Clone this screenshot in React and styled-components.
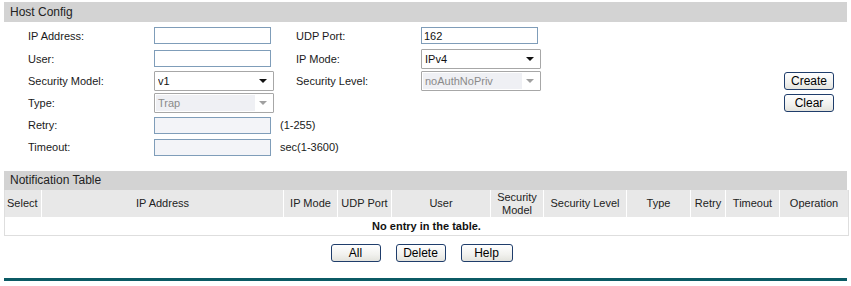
import React from 'react';
import styled, { createGlobalStyle } from 'styled-components';

const GlobalStyle = createGlobalStyle`
  body {
    margin: 0;
    background: #fff;
    font-family: "Liberation Sans", Arial, sans-serif;
    font-size: 11px;
    color: #222;
  }
`;

const columns = [
  { title: 'Select', width: 37 },
  { title: 'IP Address', width: 242 },
  { title: 'IP Mode', width: 54 },
  { title: 'UDP Port', width: 54 },
  { title: 'User', width: 99 },
  { title: ['Security', 'Model'], width: 53 },
  { title: 'Security Level', width: 83 },
  { title: 'Type', width: 64 },
  { title: 'Retry', width: 35 },
  { title: 'Timeout', width: 54 },
  { title: 'Operation', width: 68 }
];

const App = () => {
  return (
    <Page>
      <GlobalStyle />
      <SectionTitle>Host Config</SectionTitle>
      <Form>
        <ActionCell $row={3}>
          <Button>Create</Button>
        </ActionCell>
        <ActionCell $row={4}>
          <Button>Clear</Button>
        </ActionCell>

        <Label $col={1}>IP Address:</Label>
        <Cell><TextInput /></Cell>
        <Label $col={3}>UDP Port:</Label>
        <Cell><TextInput defaultValue="162" /></Cell>

        <Label $col={1}>User:</Label>
        <Cell><TextInput /></Cell>
        <Label $col={3}>IP Mode:</Label>
        <Cell>
          <Select value="IPv4" />
        </Cell>

        <Label $col={1}>Security Model:</Label>
        <Cell>
          <Select value="v1" />
        </Cell>
        <Label $col={3}>Security Level:</Label>
        <Cell>
          <Select value="noAuthNoPriv" disabled />
        </Cell>

        <Label $col={1}>Type:</Label>
        <Cell>
          <Select value="Trap" disabled />
        </Cell>

        <Label $col={1}>Retry:</Label>
        <WideCell>
          <TextInput $soft />
          <Hint>(1-255)</Hint>
        </WideCell>

        <Label $col={1}>Timeout:</Label>
        <WideCell>
          <TextInput $soft />
          <Hint>sec(1-3600)</Hint>
        </WideCell>
      </Form>

      <SectionTitle $gap>Notification Table</SectionTitle>
      <Table>
        <colgroup>
          {columns.map((c, i) => (
            <col key={i} style={{ width: c.width }} />
          ))}
        </colgroup>
        <thead>
          <tr>
            {columns.map((c, i) => (
              <HeadCell key={i}>
                {Array.isArray(c.title) ? (
                  <>
                    {c.title[0]}
                    <br />
                    {c.title[1]}
                  </>
                ) : (
                  c.title
                )}
              </HeadCell>
            ))}
          </tr>
        </thead>
        <tbody>
          <tr>
            <EmptyCell colSpan={columns.length}>No entry in the table.</EmptyCell>
          </tr>
        </tbody>
      </Table>

      <Footer>
        <Button>All</Button>
        <Button>Delete</Button>
        <Button $wide>Help</Button>
      </Footer>
      <BottomLine />
    </Page>
  );
};

const Select = ({ value, disabled }) => (
  <SelectBox>
    <NativeSelect disabled={disabled} defaultValue={value}>
      <option>{value}</option>
    </NativeSelect>
    <Arrow $disabled={disabled} />
  </SelectBox>
);

const Page = styled.div`
  width: 843px;
  margin: 2px 0 0 4px;
`;

const SectionTitle = styled.div`
  background: #d3d3d3;
  color: #222;
  font-size: 12px;
  padding-left: 6px;
  margin-top: ${(p) => (p.$gap ? '13px' : '0')};
  height: ${(p) => (p.$gap ? '19px' : '20px')};
  line-height: ${(p) => (p.$gap ? '19px' : '20px')};
`;

const Form = styled.div`
  display: grid;
  grid-template-columns: 126px 142px 125px 1fr auto;
  grid-template-rows: 23px 23px 21px 23px 22px 22px;
  align-items: center;
  padding: 2px 13px 0 24px;
`;

const Label = styled.div`
  grid-column: ${(p) => p.$col};
  color: #1a1a1a;
  white-space: nowrap;
`;

const Cell = styled.div`
  display: flex;
  align-items: center;
`;

const WideCell = styled(Cell)`
  grid-column: 2 / 5;
  gap: 9px;
`;

const ActionCell = styled.div`
  grid-column: 5;
  grid-row: ${(p) => p.$row};
  display: flex;
  justify-content: flex-end;
`;

const TextInput = styled.input`
  box-sizing: border-box;
  width: 117px;
  height: 17px;
  border: 1px solid #7f9db9;
  padding: 0 2px;
  margin: 0;
  font-family: "Liberation Sans", Arial, sans-serif;
  font-size: 11px;
  color: #111;
  background: ${(p) => (p.$soft ? '#f3f4f8' : '#fff')};
  outline: none;
`;

const Hint = styled.span`
  color: #1a1a1a;
  white-space: nowrap;
`;

const SelectBox = styled.div`
  position: relative;
  width: 120px;
  height: 20px;
`;

const NativeSelect = styled.select`
  appearance: none;
  box-sizing: border-box;
  width: 120px;
  height: 20px;
  margin: 0;
  padding: 0 3px;
  border: 1px solid #a7a7a7;
  border-radius: 1px;
  font-family: "Liberation Sans", Arial, sans-serif;
  font-size: 11px;
  color: #111;
  background: #fff;
  outline: none;

  &:disabled {
    color: #8a8a8a;
    opacity: 1;
    background: linear-gradient(to right, #eff0f4 calc(100% - 18px), #fff calc(100% - 18px));
    background-clip: content-box;
    padding: 1px 0 1px 1px;
    text-indent: 2px;
  }
`;

const Arrow = styled.span`
  position: absolute;
  right: 7px;
  top: 8px;
  width: 0;
  height: 0;
  border-left: 4px solid transparent;
  border-right: 4px solid transparent;
  border-top: 4px solid ${(p) => (p.$disabled ? '#a0a0a0' : '#111')};
  pointer-events: none;
`;

const Button = styled.button`
  box-sizing: border-box;
  width: ${(p) => (p.$wide ? '52px' : '50px')};
  height: 18px;
  padding: 0;
  border: 1px solid #1f3d6b;
  border-radius: 3px;
  background: linear-gradient(#ffffff, #f1f1ee 60%, #e3e3dd);
  font-family: "Liberation Sans", Arial, sans-serif;
  font-size: 12px;
  color: #000;
`;

const Table = styled.table`
  width: 843px;
  table-layout: fixed;
  border-collapse: separate;
  border-spacing: 0;
  border: 1px solid #dedede;
  border-top: none;
  font-size: 11px;
`;

const HeadCell = styled.th`
  height: 27px;
  padding: 0;
  background: #e8e8e8;
  border-right: 1px solid #fff;
  font-weight: normal;
  color: #222;
  line-height: 13px;
  text-align: center;

  &:first-child {
    text-align: left;
    padding-left: 2px;
  }
  &:last-child {
    border-right: none;
  }
`;

const EmptyCell = styled.td`
  height: 18px;
  padding: 0;
  text-align: center;
  font-weight: bold;
  color: #111;
`;

const Footer = styled.div`
  display: flex;
  justify-content: center;
  gap: 15px;
  padding: 8px 8px 0 0;
`;

const BottomLine = styled.div`
  margin-top: 16px;
  height: 3px;
  background: #0b5a64;
`;

export default App;
